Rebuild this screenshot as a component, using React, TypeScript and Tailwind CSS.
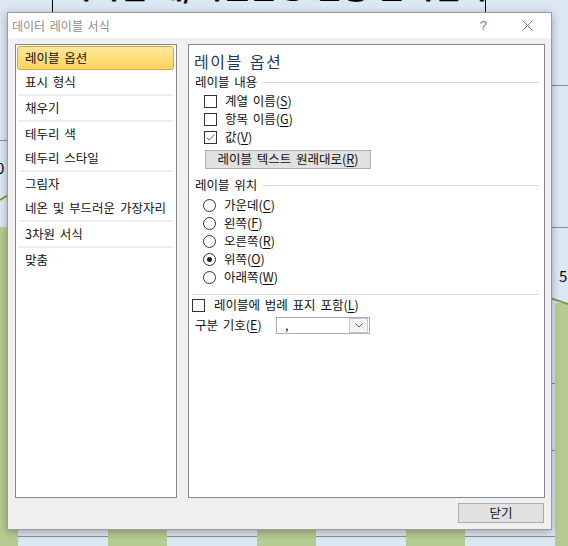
import React from "react";

const listGroups: string[][] = [
  ["레이블 옵션", "표시 형식"],
  ["채우기"],
  ["테두리 색", "테두리 스타일"],
  ["그림자", "네온 및 부드러운 가장자리"],
  ["3차원 서식"],
  ["맞춤"],
];

function Mn({ label, k }: { label: string; k: string }) {
  return (
    <span>
      {label}(<span className="underline underline-offset-2">{k}</span>)
    </span>
  );
}

function CheckBox({ checked }: { checked?: boolean }) {
  return (
    <span className="w-[13px] h-[13px] border border-[#333] bg-white flex items-center justify-center shrink-0">
      {checked && (
        <svg width="11" height="11" viewBox="0 0 11 11">
          <path d="M1.5 5.5 L4.2 8.2 L9.5 2.5" fill="none" stroke="#666" strokeWidth="1" />
        </svg>
      )}
    </span>
  );
}

function Radio({ checked }: { checked?: boolean }) {
  return (
    <span className="w-[13px] h-[13px] rounded-full border border-[#333] bg-white flex items-center justify-center shrink-0">
      {checked && <span className="w-[5px] h-[5px] rounded-full bg-[#222]" />}
    </span>
  );
}

function SectionLabel({ text }: { text: string }) {
  return (
    <div className="flex items-center h-[16px] leading-[16px] pl-[3px] gap-[6px]">
      <span>{text}</span>
      <span className="flex-1 h-px bg-[#dcdcdc]" />
    </div>
  );
}

export default function App() {
  const positions: [string, string, boolean][] = [
    ["가운데", "C", false],
    ["왼쪽", "F", false],
    ["오른쪽", "R", false],
    ["위쪽", "O", true],
    ["아래쪽", "W", false],
  ];

  return (
    <div className="relative w-[568px] h-[546px] overflow-hidden bg-[#dce7f4] font-['Noto_Sans_CJK_KR',sans-serif] text-[12.5px] text-[#111] [word-spacing:2px]">
      {/* chart behind the dialog */}
      <div className="absolute left-0 right-0 top-[536px] h-px bg-[#8e8e8e]" />
      <div className="absolute left-[552px] right-0 top-[85px] h-px bg-[#8e8e8e]" />
      <div className="absolute left-[552px] right-0 top-[227px] h-px bg-[#8e8e8e]" />
      <div className="absolute left-[552px] right-0 top-[383px] h-px bg-[#8e8e8e]" />
      <div className="absolute left-[552px] right-0 top-[450px] h-px bg-[#8e8e8e]" />
      <div className="absolute left-0 w-[8px] top-[140px] h-px bg-[#8e8e8e]" />
      <div className="absolute left-[-4px] top-[160px] text-[15px] leading-none text-black">0</div>
      <div className="absolute left-[559px] top-[268px] text-[15px] leading-none text-black">5</div>
      <div className="absolute left-[-41px] w-[59px] top-[227px] bottom-0 bg-[#b6cb91]" />
      <div className="absolute left-[108px] w-[59px] top-[400px] bottom-0 bg-[#b6cb91]" />
      <div className="absolute left-[257px] w-[59px] top-[400px] bottom-0 bg-[#b6cb91]" />
      <div className="absolute left-[406px] w-[59px] top-[400px] bottom-0 bg-[#b6cb91]" />
      <div className="absolute left-[555px] w-[59px] top-[303px] bottom-0 bg-[#b6cb91]" />
      <svg className="absolute left-0 top-0" width="568" height="546">
        <polyline points="0,200 10,194" fill="none" stroke="#7f9f3e" strokeWidth="2" />
        <polyline points="550,298 568,304" fill="none" stroke="#7f9f3e" strokeWidth="2" />
      </svg>
      <div className="absolute left-[52px] top-0 w-px h-[12px] bg-black" />
      <div className="absolute left-[485px] top-0 w-px h-[12px] bg-black" />
      <div className="absolute left-[64px] top-[-30px] text-[30px] font-bold leading-none text-black whitespace-nowrap">
        지역별 재/지원운영 현황 분석결과
      </div>

      {/* dialog window */}
      <div className="absolute left-[7px] top-[12px] w-[545px] h-[518px] border border-[#9c9c9c] bg-[#f0f0f0] shadow-[0_2px_8px_rgba(0,0,0,0.3)] flex flex-col">
        <div className="h-[25px] bg-white flex items-center pl-[4px] pr-[18px] shrink-0">
          <span className="text-[12px] text-[#8c8c8c]">데이터 레이블 서식</span>
          <span className="ml-auto text-[13px] text-[#7a7a7a] font-['Liberation_Sans',sans-serif] mr-[35px]">?</span>
          <svg width="11" height="11" viewBox="0 0 11 11">
            <path d="M0.5 0.5 L10.5 10.5 M10.5 0.5 L0.5 10.5" stroke="#7a7a7a" strokeWidth="1" />
          </svg>
        </div>

        <div className="flex-1 flex flex-col pt-[6px] pl-[7px] pr-[6px] pb-[6px]">
          <div className="flex gap-[11px] h-[454px]">
            {/* category list */}
            <div className="w-[162px] border border-[#828790] bg-white pt-[1px] px-[1px] flex flex-col">
              {listGroups.map((group, gi) => (
                <div key={gi} className="flex flex-col">
                  {gi > 0 && <div className="h-[2px] bg-[#eeeef3] mx-[1px]" />}
                  {group.map((item) => {
                    const selected = item === "레이블 옵션";
                    return (
                      <div
                        key={item}
                        className={
                          selected
                            ? "h-[24px] mr-[1px] flex items-center pl-[7px] rounded-[3px] border border-[#d9a73c] bg-gradient-to-b from-[#ffe79a] to-[#ffd35f]"
                            : "h-[24px] mr-[1px] flex items-center pl-[8px]"
                        }
                      >
                        {item}
                      </div>
                    );
                  })}
                </div>
              ))}
            </div>

            {/* options panel */}
            <div className="flex-1 border border-[#828790] bg-white pl-[3px] pr-[5px] pt-[5px] flex flex-col">
              <div className="h-[22px] leading-[22px] pl-[2px] text-[16px] tracking-[1.5px] text-[#1e3a5f]">레이블 옵션</div>
              <div className="mt-[2px]">
                <SectionLabel text="레이블 내용" />
              </div>
              <div className="mt-[2px] flex flex-col pl-[12px]">
                <div className="h-[18px] flex items-center gap-[8px]">
                  <CheckBox />
                  <Mn label="계열 이름" k="S" />
                </div>
                <div className="h-[18px] flex items-center gap-[8px]">
                  <CheckBox />
                  <Mn label="항목 이름" k="G" />
                </div>
                <div className="h-[18px] flex items-center gap-[8px]">
                  <CheckBox checked />
                  <Mn label="값" k="V" />
                </div>
              </div>
              <div className="mt-[4px] pl-[13px]">
                <div className="w-[166px] h-[19px] border border-[#adadad] bg-[#e1e1e1] flex items-center justify-center">
                  <Mn label="레이블 텍스트 원래대로" k="R" />
                </div>
              </div>
              <div className="mt-[8px]">
                <SectionLabel text="레이블 위치" />
              </div>
              <div className="mt-[3px] flex flex-col pl-[11px]">
                {positions.map(([label, k, on]) => (
                  <div key={k} className="h-[18px] flex items-center gap-[8px]">
                    <Radio checked={on} />
                    <Mn label={label} k={k} />
                  </div>
                ))}
              </div>
              <div className="mt-[8px] h-px bg-[#dcdcdc]" />
              <div className="mt-[1px] h-[18px] flex items-center gap-[9px]">
                <CheckBox />
                <Mn label="레이블에 범례 표지 포함" k="L" />
              </div>
              <div className="mt-[3px] h-[17px] flex items-center pl-[3px]">
                <span className="w-[81px]">
                  <Mn label="구분 기호" k="E" />
                </span>
                <div className="w-[94px] h-[17px] border border-[#abadb3] bg-white flex items-center">
                  <span className="pl-[8px] flex-1 leading-none">,</span>
                  <div className="w-[19px] h-[15px] mr-[1px] border border-[#c8c8c8] bg-[#f4f4f4] flex items-center justify-center">
                    <svg width="8" height="5" viewBox="0 0 8 5">
                      <path d="M0.5 0.5 L4 4 L7.5 0.5" fill="none" stroke="#555" strokeWidth="1" />
                    </svg>
                  </div>
                </div>
              </div>
            </div>
          </div>

          <div className="mt-[5px] flex justify-end pr-[1px]">
            <div className="w-[86px] h-[20px] border border-[#adadad] bg-[#e1e1e1] flex items-center justify-center">
              닫기
            </div>
          </div>
        </div>
      </div>
    </div>
  );
}
